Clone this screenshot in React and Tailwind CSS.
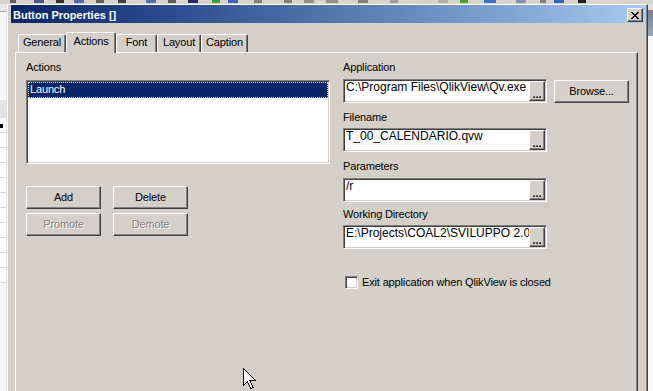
import React from "react";

const raised =
  "border border-t-white border-l-white border-r-[#404040] border-b-[#404040] shadow-[inset_-1px_-1px_0_#808080,inset_1px_1px_0_#d4d0c8]";
const sunken =
  "border border-t-[#808080] border-l-[#808080] border-r-white border-b-white shadow-[inset_1px_1px_0_#404040,inset_-1px_-1px_0_#d4d0c8]";

function Btn({ children, disabled, className = "" }) {
  return (
    <div
      className={`flex items-center justify-center bg-[#d4d0c8] ${raised} ${
        disabled ? "text-[#808080] [text-shadow:1px_1px_0_#ffffff]" : "text-black"
      } ${className}`}
    >
      {children}
    </div>
  );
}

function Field({ value }) {
  return (
    <div className={`flex w-[204px] h-[24px] p-[1px] bg-white ${sunken}`}>
      <div className="flex-1 min-w-0 overflow-hidden whitespace-nowrap pl-[1px] text-[12px] leading-[13px] tracking-normal text-black">
        {value}
      </div>
      <div
        className={`w-[16px] h-[20px] shrink-0 bg-[#d4d0c8] ${raised} flex items-end justify-center font-bold leading-[10px] pb-[1px] tracking-normal text-black`}
      >
        ...
      </div>
    </div>
  );
}

function Tab({ label, w, selected }) {
  return (
    <div
      className={`${w} flex justify-center bg-[#d4d0c8] border-l border-t border-r border-l-white border-t-white border-r-[#404040] rounded-t-[2px] shadow-[inset_-1px_0_0_#808080] ${
        selected ? "h-[21px] -mb-px relative z-20 pt-[2px]" : "h-[18px] pt-[1px]"
      }`}
    >
      {label}
    </div>
  );
}

function CloseGlyph() {
  const rows = [
    [0, 1, 6, 7],
    [1, 2, 5, 6],
    [2, 3, 4, 5],
    [3, 4],
    [2, 3, 4, 5],
    [1, 2, 5, 6],
    [0, 1, 6, 7],
  ];
  return (
    <svg width="8" height="7" viewBox="0 0 8 7" shapeRendering="crispEdges">
      {rows.map((cols, y) =>
        cols.map((x) => <rect key={`${y}-${x}`} x={x} y={y} width="1" height="1" fill="#000" />)
      )}
    </svg>
  );
}

function Toolbar() {
  const bits = [
    ["ml-[10px] w-[6px]", "bg-[#606060]"],
    ["ml-[18px] w-[10px]", "bg-[#4a5a8a]"],
    ["ml-[12px] w-[8px]", "bg-[#303030]"],
    ["ml-[10px] w-[10px]", "bg-[#5070b0]"],
    ["ml-[12px] w-[8px]", "bg-[#606060]"],
    ["ml-[14px] w-[8px]", "bg-[#404040]"],
    ["ml-[20px] w-[10px]", "bg-[#5070b0]"],
    ["ml-[12px] w-[8px]", "bg-[#606060]"],
    ["ml-[12px] w-[10px]", "bg-[#2a2a6a]"],
    ["ml-[14px] w-[8px]", "bg-[#40a040]"],
    ["ml-[8px] w-[10px]", "bg-[#4060c0]"],
    ["ml-[16px] w-[8px]", "bg-[#808080]"],
    ["ml-[22px] w-[8px]", "bg-[#808080]"],
    ["ml-[12px] w-[10px]", "bg-[#909090]"],
    ["ml-[12px] w-[12px]", "bg-[#909090]"],
    ["ml-[20px] w-[10px]", "bg-[#808080]"],
    ["ml-[22px] w-[8px]", "bg-[#a0a0a0]"],
    ["ml-[40px] w-[10px]", "bg-[#b0b0b0]"],
    ["ml-[12px] w-[8px]", "bg-[#40a040]"],
    ["ml-[16px] w-[12px]", "bg-[#4070c0]"],
    ["ml-[20px] w-[10px]", "bg-[#8090b0]"],
    ["ml-[14px] w-[6px]", "bg-[#808080]"],
    ["ml-[8px] w-[10px]", "bg-[#3060c0]"],
    ["ml-[14px] w-[8px]", "bg-[#202020]"],
  ];
  return (
    <div className="h-[4px] shrink-0 flex items-start bg-[#d8d4cc] overflow-hidden">
      {bits.map(([a, b], i) => (
        <div key={i} className={`${a} ${b} h-[3px] shrink-0`} />
      ))}
    </div>
  );
}

function LeftStrip() {
  const rows = Array.from({ length: 11 });
  return (
    <div className="w-[7px] shrink-0 flex flex-col border-r border-r-[#e0e0e0]">
      <div className="h-[7px] bg-[#e6e6e6]" />
      <div className="h-[1px] bg-[#a8a8a8]" />
      <div className="h-[88px] bg-[#f7f7f7]" />
      <div className="h-[18px] bg-[#e2e2e2]" />
      {rows.map((_, i) => (
        <div key={i} className="h-[15px] bg-white border-b border-b-[#d6d6d6] flex items-center">
          {i === 0 && <div className="w-[3px] h-[4px] bg-black mt-[1px]" />}
        </div>
      ))}
      <div className="flex-1 bg-[#f6f6f6]" />
    </div>
  );
}

function RightStrip() {
  return (
    <div className="flex-1 flex flex-col">
      <div className="h-[6px] bg-[#dedede]" />
      <div className="h-[26px] bg-linear-to-b from-[#6f819c] to-[#9aa8bc]" />
      <div className="flex-1 bg-[#f8f8f8]" />
    </div>
  );
}

function Cursor() {
  return (
    <svg
      className="absolute left-[243px] top-[368px]"
      width="13"
      height="22"
      viewBox="0 0 13 22"
      shapeRendering="crispEdges"
    >
      <path
        d="M0.5 0.5 L0.5 17.5 L4.5 13.5 L7.5 20.5 L10 19.5 L7 12.5 L12.5 12.5 Z"
        fill="#fff"
        stroke="#000"
        strokeWidth="1"
      />
    </svg>
  );
}

function Dialog() {
  return (
    <div className="w-[641px] shrink-0 flex flex-col bg-[#d4d0c8] border-l border-t border-r border-l-white border-t-white border-r-[#404040]">
      <div className="flex-1 flex flex-col border-r border-r-[#808080] pl-[3px] pr-[1px]">
        <div className="h-[18px] shrink-0 flex items-start bg-linear-to-r from-[#0a246a] to-[#a6caf0]">
          <div className="flex-1 pl-[2px] pt-[4px] font-bold text-white whitespace-nowrap tracking-normal">
            Button Properties []
          </div>
          <div className={`mt-[3px] mr-[2px] w-[16px] h-[14px] bg-[#d4d0c8] ${raised} flex items-center justify-center`}>
            <CloseGlyph />
          </div>
        </div>

        <div className="mt-[9px] ml-[7px] h-[20px] shrink-0 flex items-end">
          <Tab label="General" w="w-[48px]" />
          <Tab label="Actions" w="w-[50px]" selected />
          <Tab label="Font" w="w-[41px]" />
          <Tab label="Layout" w="w-[44px]" />
          <Tab label="Caption" w="w-[47px]" />
        </div>

        <div className="ml-[4px] mr-[7px] flex-1 flex border-l border-t border-r border-l-white border-t-white border-r-[#404040] shadow-[inset_-1px_0_0_#808080] pt-[7px] pl-[10px]">
          <div className="w-[304px] shrink-0 flex flex-col">
            <div className="h-[20px] pt-[1px]">Actions</div>
            <div className={`h-[84px] p-[1px] bg-white ${sunken}`}>
              <div className="h-[16px] border border-dotted border-[#e8e0b0] bg-[#0a246a] text-white pl-[1px]">
                Launch
              </div>
            </div>
            <div className="mt-[22px] flex gap-[12px]">
              <Btn className="w-[75px] h-[23px]">Add</Btn>
              <Btn className="w-[75px] h-[23px]">Delete</Btn>
            </div>
            <div className="mt-[4px] flex gap-[12px]">
              <Btn className="w-[75px] h-[23px]" disabled>
                Promote
              </Btn>
              <Btn className="w-[75px] h-[23px]" disabled>
                Demote
              </Btn>
            </div>
          </div>

          <div className="ml-[13px] flex flex-col">
            <div className="h-[19px] pt-[1px]">Application</div>
            <div className="flex items-start">
              <Field value={"C:\\Program Files\\QlikView\\Qv.exe"} />
              <Btn className="ml-[7px] mt-[1px] w-[75px] h-[23px]">Browse...</Btn>
            </div>
            <div className="mt-[7px] h-[18px] pt-[1px]">Filename</div>
            <Field value="T_00_CALENDARIO.qvw" />
            <div className="mt-[7px] h-[19px] pt-[1px]">Parameters</div>
            <Field value="/r" />
            <div className="mt-[5px] h-[18px] pt-[1px]">Working Directory</div>
            <Field value={"E:\\Projects\\COAL2\\SVILUPPO 2.0"} />
            <div className="mt-[27px] flex items-center">
              <div className={`ml-[2px] w-[13px] h-[13px] bg-white ${sunken}`} />
              <span className="ml-[4px] whitespace-nowrap">Exit application when QlikView is closed</span>
            </div>
          </div>
        </div>
      </div>
    </div>
  );
}

export default function App() {
  return (
    <div className="relative w-[653px] h-[391px] overflow-hidden flex flex-col bg-[#f6f6f6] font-['Liberation_Sans',Arial,sans-serif] text-[11px] leading-[13px] tracking-[-0.15px] text-black select-none">
      <Toolbar />
      <div className="flex flex-1 min-h-0">
        <LeftStrip />
        <Dialog />
        <RightStrip />
      </div>
      <Cursor />
    </div>
  );
}
